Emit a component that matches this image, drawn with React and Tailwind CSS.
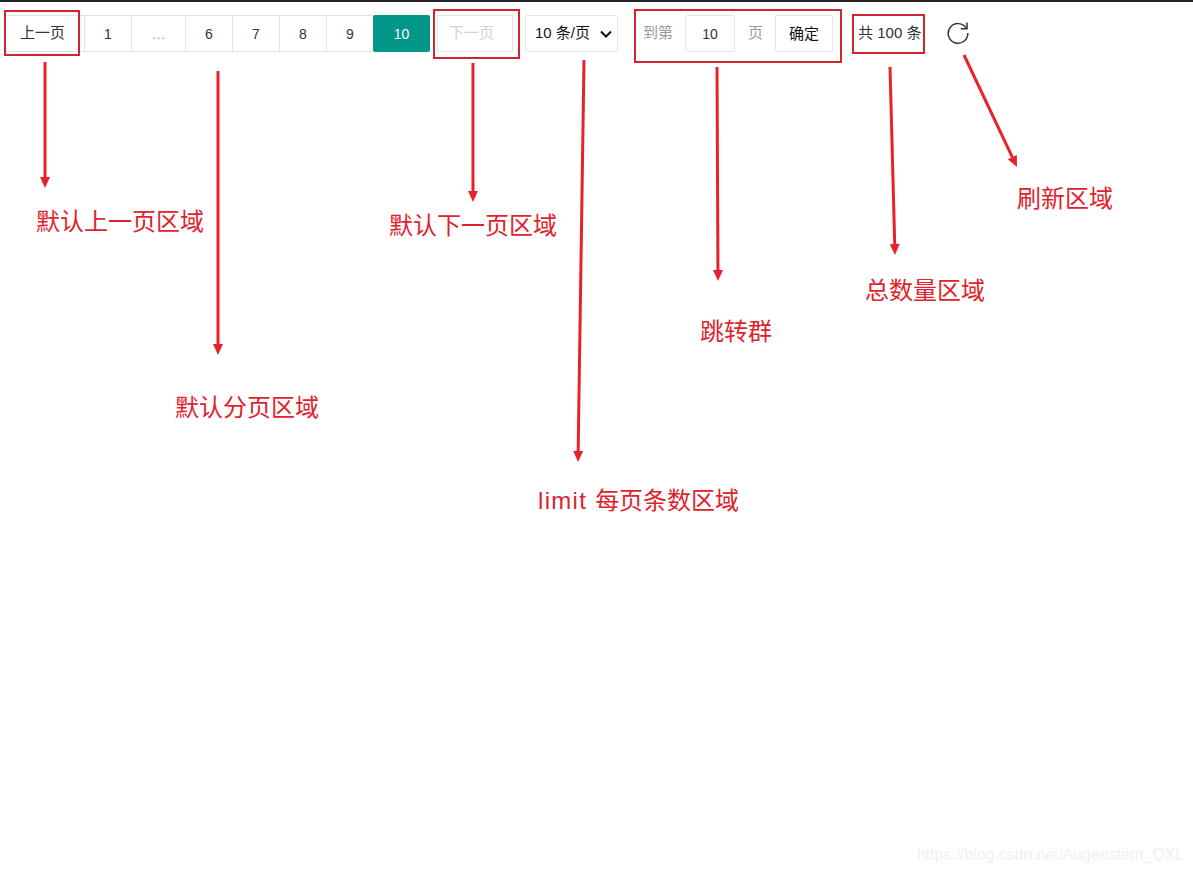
import React from "react";

const FONT = "[font-family:'Liberation_Sans','Noto_Sans_CJK_SC',sans-serif]";

const pages = [
  { label: "1", width: "w-[47px]" },
  { label: "…", width: "w-[54px]", muted: true },
  { label: "6", width: "w-[47px]" },
  { label: "7", width: "w-[47px]" },
  { label: "8", width: "w-[47px]" },
  { label: "9", width: "w-[47px]" },
];

// red note boxes, each sits over the control it explains
const boxes = [
  "left-[4px] top-[10px] w-[76px] h-[46px]",
  "left-[433px] top-[9px] w-[87px] h-[50px]",
  "left-[634px] top-[9px] w-[208px] h-[54px]",
  "left-[852px] top-[14px] w-[73px] h-[40px]",
];

const notes = [
  { text: "默认上一页区域", pos: "left-[36px] top-[204px]" },
  { text: "默认分页区域", pos: "left-[175px] top-[390px]" },
  { text: "默认下一页区域", pos: "left-[389px] top-[208px]" },
  { prefix: "limit ", text: "每页条数区域", pos: "left-[538px] top-[483px]" },
  { text: "跳转群", pos: "left-[700px] top-[314px]" },
  { text: "总数量区域", pos: "left-[865px] top-[273px]" },
  { text: "刷新区域", pos: "left-[1017px] top-[181px]" },
];

const arrows = [
  [45, 62, 45, 188],
  [218, 71, 218, 355],
  [473, 63, 473, 202],
  [584, 60, 578, 462],
  [717, 67, 718, 281],
  [890, 67, 895, 255],
  [964, 55, 1017, 167],
];

const Arrow = ({ line }) => {
  const [x1, y1, x2, y2] = line;
  const len = Math.hypot(x2 - x1, y2 - y1);
  const ux = (x2 - x1) / len;
  const uy = (y2 - y1) / len;
  const bx = x2 - ux * 11;
  const by = y2 - uy * 11;
  const head = `${x2},${y2} ${bx - uy * 5},${by + ux * 5} ${bx + uy * 5},${by - ux * 5}`;
  return (
    <g>
      <line x1={x1} y1={y1} x2={bx} y2={by} stroke="#e8212b" strokeWidth="3" />
      <polygon points={head} fill="#e8212b" />
    </g>
  );
};

const App = () => {
  return (
    <div className={`relative w-[1193px] h-[874px] overflow-hidden bg-white ${FONT}`}>
      <div className="h-[2px] bg-[#222222]" />

      {/* Pagination bar */}
      <div className="flex items-center pl-[5px] pt-[13px] text-[15px] text-[#333333]">
        <div className="flex h-[37px] w-[79px] items-center justify-center border border-[#e2e2e2] border-r-0 pr-[5px]">
          上一页
        </div>
        {pages.map((page) => (
          <div
            key={page.label}
            className={`flex h-[37px] items-center justify-center border border-[#e2e2e2] border-r-0 text-sm ${page.width} ${page.muted ? "text-[#999999]" : ""}`}
          >
            {page.label}
          </div>
        ))}
        <div className="flex h-[37px] w-[57px] items-center justify-center rounded-[2px] bg-[#009688] text-sm text-white">
          10
        </div>
        <div className="ml-[7px] flex h-[37px] w-[76px] items-center justify-center border border-[#e2e2e2] pr-[7px] text-[#d2d2d2]">
          下一页
        </div>

        <div className="ml-[12px] flex h-[37px] w-[93px] items-center justify-between rounded-[2px] border border-[#e6e6e6] pl-[9px] pr-[5px] text-[#111111]">
          <span>10 条/页</span>
          <svg width="12" height="8" viewBox="0 0 12 8" fill="none" stroke="#111111" strokeWidth="2">
            <path d="M1 1.5l5 5 5-5" />
          </svg>
        </div>

        <span className="ml-[25px] text-[#999999]">到第</span>
        <div className="ml-[12px] flex h-[37px] w-[50px] items-center justify-center rounded-[2px] border border-[#e6e6e6] text-sm">
          10
        </div>
        <span className="ml-[13px] text-[#999999]">页</span>
        <div className="ml-[12px] flex h-[37px] w-[58px] items-center justify-center rounded-[2px] border border-[#e6e6e6] pt-[2px] text-[#111111]">
          确定
        </div>

        <span className="ml-[25px] whitespace-pre">共 100 条</span>

        <svg className="ml-[25px] mb-[4px]" width="24" height="24" viewBox="0 0 24 24" fill="none" stroke="#333333" strokeWidth="1.5">
          <path d="M20.5 8.5A9.8 9.8 0 1 0 21.8 13" />
          <path d="M21 2.5v6.3h-6.3" />
        </svg>
      </div>

      {/* Red annotations drawn over the screenshot */}
      {boxes.map((pos) => (
        <div key={pos} className={`absolute border-2 border-[#d0252f] ${pos}`} />
      ))}
      <svg className="absolute left-0 top-0" width="1193" height="874">
        {arrows.map((line) => (
          <Arrow key={line.join("-")} line={line} />
        ))}
      </svg>
      {notes.map((note) => (
        <span
          key={note.text}
          className={`absolute whitespace-pre text-2xl leading-[36px] text-[#e0222c] ${note.pos}`}
        >
          {note.prefix && <span className="tracking-[1.3px]">{note.prefix}</span>}
          {note.text}
        </span>
      ))}

      <span className="absolute left-[917px] top-[845px] text-[15.8px] leading-[20px] text-[#f0f0f0]">
        https://blog.csdn.net/Augenstern_QXL
      </span>
    </div>
  );
};

export default App;
